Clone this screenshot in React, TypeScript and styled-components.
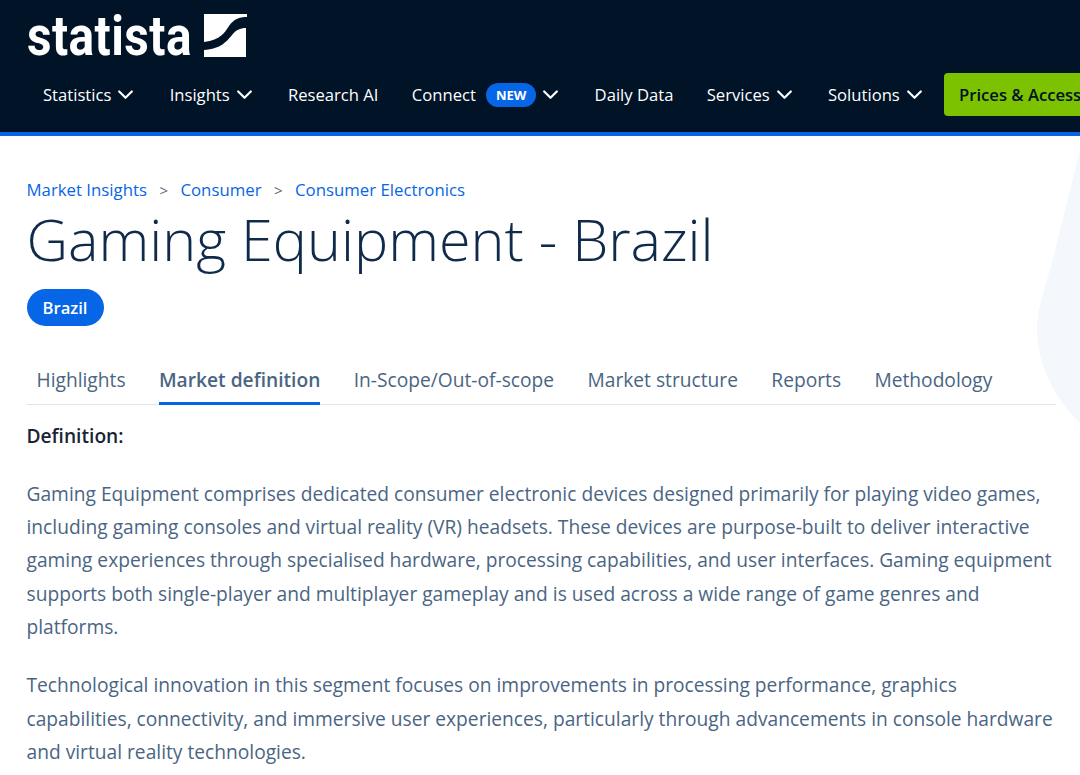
import React from "react";
import styled, { createGlobalStyle } from "styled-components";

const navItems = [
  { label: "Statistics", arrow: true },
  { label: "Insights", arrow: true },
  { label: "Research AI", arrow: false },
  { label: "Connect", arrow: true, badge: "NEW" },
  { label: "Daily Data", arrow: false },
  { label: "Services", arrow: true },
  { label: "Solutions", arrow: true },
];

const crumbs = ["Market Insights", "Consumer", "Consumer Electronics"];

const tabs = [
  "Highlights",
  "Market definition",
  "In-Scope/Out-of-scope",
  "Market structure",
  "Reports",
  "Methodology",
];

const Chevron = () => (
  <svg width="18" height="10" viewBox="0 0 18 10" fill="none">
    <path d="M1.2 1.5L7.5 7.8L13.8 1.5" stroke="#fff" strokeWidth="2.2" strokeLinecap="round" strokeLinejoin="round" />
  </svg>
);

const App: React.FC = () => {
  return (
    <Page>
      <GlobalStyle />
      <Header>
        <Logo>
          <LogoText>statista</LogoText>
          <svg width="44" height="44" viewBox="0 0 44 44">
            <path
              d="M1 0H44V3C36 3 31 5 26 12C22 18 18 26 1 28Z M43 14V43H1V36C18 35 24 27 29 21C33 16 37 14 43 14Z"
              fill="#fff"
            />
          </svg>
        </Logo>
        <Nav>
          {navItems.map((item) => (
            <NavItem key={item.label}>
              {item.label}
              {item.badge && <Badge>{item.badge}</Badge>}
              {item.arrow && <Chevron />}
            </NavItem>
          ))}
          <PricesButton>Prices &amp; Access</PricesButton>
        </Nav>
      </Header>
      <Main>
        <Blob viewBox="0 0 44 273">
          <path d="M44 0L16 113C8 140 1 160 1 180C1 215 20 250 44 273Z" fill="#f4f7fb" />
        </Blob>
        <Breadcrumbs>
          {crumbs.map((crumb, index) => (
            <React.Fragment key={crumb}>
              {index > 0 && <Separator>&gt;</Separator>}
              <Crumb>{crumb}</Crumb>
            </React.Fragment>
          ))}
        </Breadcrumbs>
        <Title>Gaming Equipment - Brazil</Title>
        <Pill>Brazil</Pill>
        <TabBar>
          {tabs.map((tab) => (
            <Tab key={tab} $active={tab === "Market definition"}>
              {tab}
            </Tab>
          ))}
        </TabBar>
        <Subheading>Definition:</Subheading>
        <Paragraph>
          Gaming Equipment comprises dedicated consumer electronic devices designed primarily for playing video games,
          including gaming consoles and virtual reality (VR) headsets. These devices are purpose-built to deliver
          interactive gaming experiences through specialised hardware, processing capabilities, and user interfaces.
          Gaming equipment supports both single-player and multiplayer gameplay and is used across a wide range of game
          genres and platforms.
        </Paragraph>
        <Paragraph>
          Technological innovation in this segment focuses on improvements in processing performance, graphics
          capabilities, connectivity, and immersive user experiences, particularly through advancements in console
          hardware and virtual reality technologies.
        </Paragraph>
      </Main>
    </Page>
  );
};

export default App;

const GlobalStyle = createGlobalStyle`
  html, body {
    margin: 0;
    padding: 0;
    background: #fff;
  }
  body {
    font-family: "Open Sans", "Noto Sans", sans-serif;
  }
`;

const Page = styled.div`
  width: 1080px;
  height: 775px;
  overflow: hidden;
`;

const Header = styled.header`
  box-sizing: border-box;
  height: 136px;
  background: #001327;
  border-bottom: 4px solid #0666e5;
  padding: 14px 0 0 27px;
  display: flex;
  flex-direction: column;
`;

const Logo = styled.div`
  display: flex;
  align-items: flex-start;
  height: 44px;
  color: #fff;
`;

const LogoText = styled.span`
  font-family: "Roboto", "Liberation Sans", sans-serif;
  font-weight: 700;
  font-size: 56px;
  line-height: 44px;
  letter-spacing: 0.5px;
  width: 176px;
  transform: scaleX(0.854);
  transform-origin: left center;
  white-space: nowrap;
`;

const Nav = styled.nav`
  display: flex;
  align-items: center;
  gap: 33.3px;
  margin-top: 14px;
  padding-left: 16px;
  height: 46px;
  white-space: nowrap;
`;

const NavItem = styled.span`
  display: inline-flex;
  align-items: center;
  gap: 7px;
  flex-shrink: 0;
  color: #fff;
  font-size: 16.64px;
  line-height: 24px;
`;

const Badge = styled.span`
  margin-left: 3px;
  background: #0666e5;
  color: #fff;
  font-size: 13px;
  font-weight: 700;
  line-height: 24px;
  height: 24px;
  padding: 0 10px;
  border-radius: 12px;
`;

const PricesButton = styled.span`
  flex-shrink: 0;
  margin-left: -14px;
  margin-top: -2px;
  background: #7cc200;
  color: #001327;
  font-size: 16.64px;
  font-weight: 600;
  line-height: 43px;
  height: 43px;
  padding: 0 15px;
  border-radius: 4px;
`;

const Main = styled.main`
  position: relative;
  isolation: isolate;
  padding: 40px 24px 0 26.5px;
`;

const Blob = styled.svg`
  position: absolute;
  top: 14px;
  right: 0;
  width: 44px;
  height: 273px;
  z-index: -1;
`;

const Breadcrumbs = styled.div`
  display: flex;
  align-items: center;
  height: 27px;
  font-size: 16.8px;
`;

const Crumb = styled.span`
  color: #0666e5;
`;

const Separator = styled.span`
  color: #5a6c80;
  width: 33.5px;
  text-align: center;
  font-size: 15px;
`;

const Title = styled.h1`
  margin: 0;
  color: #0f2a4a;
  font-size: 57.5px;
  font-weight: 300;
  line-height: 72px;
  white-space: nowrap;
`;

const Pill = styled.span`
  display: inline-block;
  margin-top: 14px;
  height: 37px;
  line-height: 37px;
  padding: 0 16px;
  border-radius: 19px;
  background: #0666e5;
  color: #fff;
  font-size: 16.64px;
  font-weight: 600;
`;

const TabBar = styled.div`
  display: flex;
  gap: 33.4px;
  margin-top: 23px;
  padding-left: 10px;
  border-bottom: 1px solid #e1e4e8;
  height: 56px;
  align-items: flex-end;
  box-sizing: border-box;
`;

const Tab = styled.span<{ $active: boolean }>`
  color: #4a6583;
  font-size: 19.2px;
  font-weight: ${(props) => (props.$active ? 600 : 400)};
  line-height: 26px;
  padding-bottom: 9px;
  margin-bottom: -1px;
  border-bottom: 3px solid ${(props) => (props.$active ? "#0666e5" : "transparent")};
  white-space: nowrap;
`;

const Subheading = styled.div`
  margin-top: 17px;
  color: #1a2433;
  font-size: 19.2px;
  font-weight: 600;
  line-height: 28px;
`;

const Paragraph = styled.p`
  margin: 26.5px 0 0;
  color: #4a6583;
  font-size: 19.2px;
  line-height: 33.4px;
  & + & {
    margin-top: 24.6px;
  }
`;
